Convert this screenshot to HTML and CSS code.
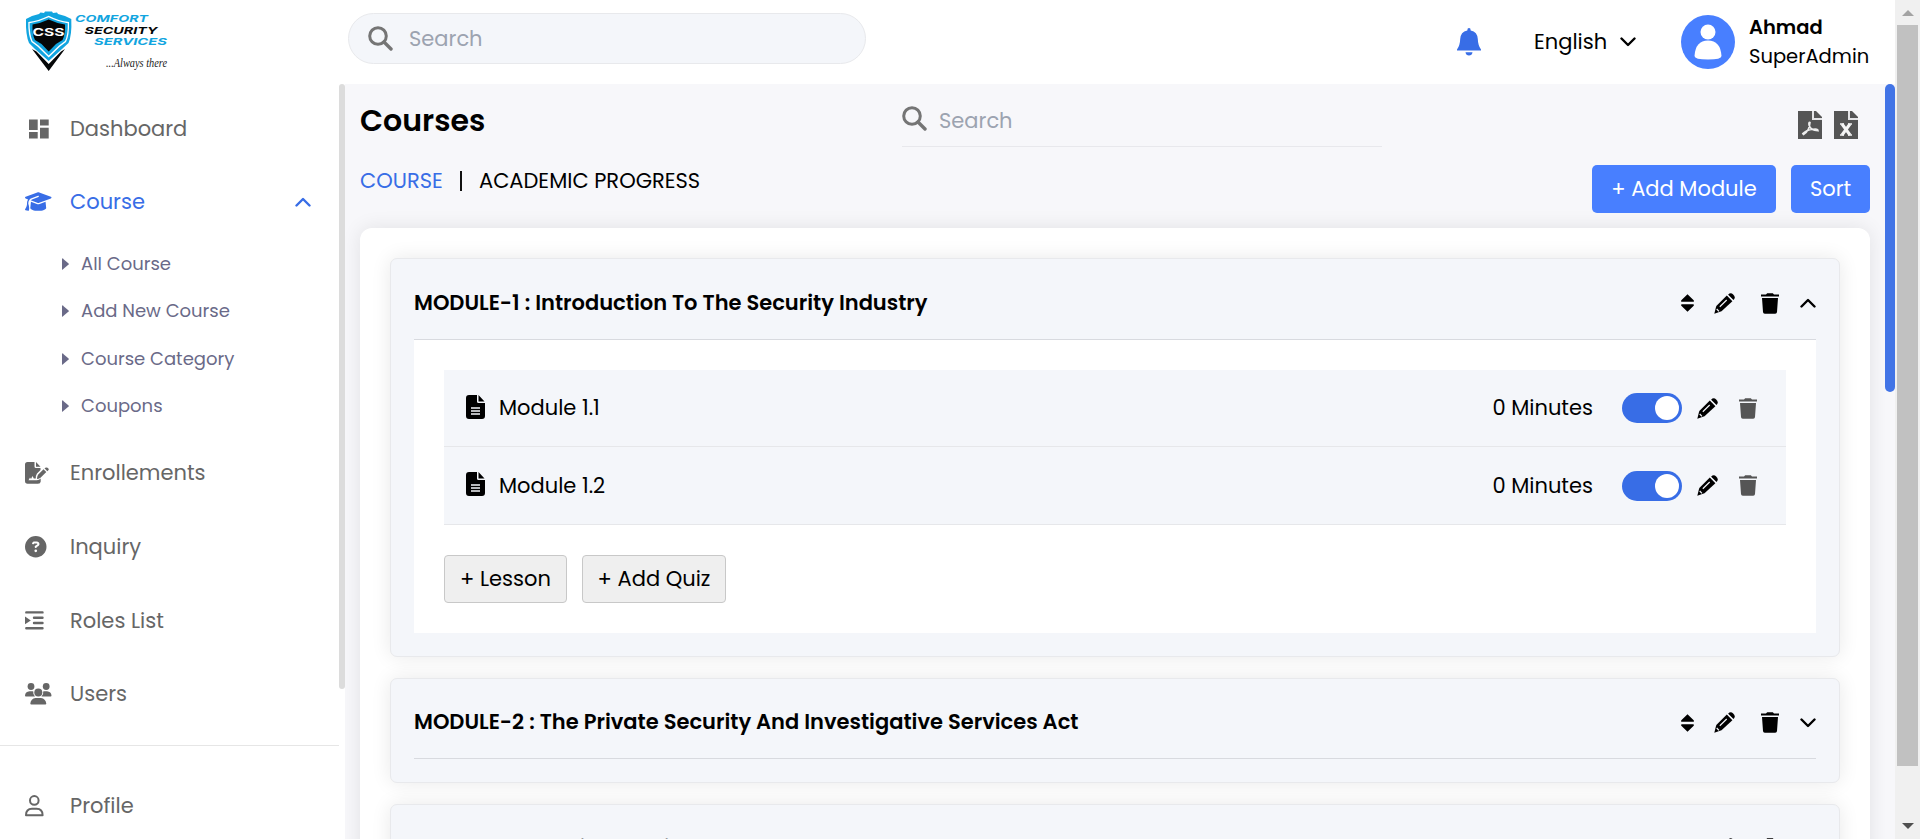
FILE: index.html
```html
<!DOCTYPE html>
<html lang="en">
<head>
<meta charset="utf-8">
<title>Courses</title>
<link rel="stylesheet" href="styles.css">
</head>
<body>
<svg width="0" height="0" class="sprite">
  <symbol id="search" viewBox="0 0 25 25"><circle cx="10" cy="10" r="8.3" fill="none" stroke="currentColor" stroke-width="3"/><path d="M16 16l7 7" stroke="currentColor" stroke-width="3.4" stroke-linecap="round"/></symbol>
  <symbol id="down" viewBox="0 0 16 10"><path d="M1.5 1.5L8 8l6.500-6.500" fill="none" stroke="currentColor" stroke-width="2.400" stroke-linecap="round" stroke-linejoin="round"/></symbol>
  <symbol id="up" viewBox="0 0 16 10"><path d="M1.500 8.500L8 2l6.500 6.500" fill="none" stroke="currentColor" stroke-width="2.400" stroke-linecap="round" stroke-linejoin="round"/></symbol>
  <symbol id="sort" viewBox="0 0 13 18"><path d="M6.500 0.300L12.700 6.300Q13.400 7.800 12 7.800H1Q-0.400 7.800 0.300 6.300ZM6.500 17.700L12.700 11.700Q13.400 10.200 12 10.200H1Q-0.400 10.200 0.300 11.700Z" fill="currentColor"/></symbol>
  <symbol id="pencil" viewBox="0 0 21 21"><path d="M12.800 2.400L18.400 8.200L7.500 18.300L0.300 20.700L2.300 13Z" fill="currentColor"/><path d="M14.100 1.700Q16.500-.9 19.200 1.500Q22.200 4.400 19.500 6.900Z" fill="currentColor"/><path d="M5.800 13.700L12.700 7M2.700 16L5 18.300" stroke="#f4f6fa" stroke-width="1.200"/><path d="M13.400 2.100L18.900 7.700" stroke="#f4f6fa" stroke-width="0.900"/></symbol>
  <symbol id="trash" viewBox="0 0 18 21"><path d="M0 1.500H5L6.200 0.300H11.800L13 1.500H18V3.500H0ZM1 5H17L16 19Q15.900 20.700 14.200 20.700H3.800Q2.100 20.700 2 19Z" fill="currentColor"/></symbol>
  <symbol id="doc" viewBox="0 0 19 24"><path d="M3 0H11V6.500Q11 8 12.500 8H19V21Q19 24 16 24H3Q0 24 0 21V3Q0 0 3 0ZM12.500 0L18.500 6.500H12.500Z" fill="currentColor"/><path d="M5 13H14M5 16H14M5 19H14" stroke="#f4f6fa" stroke-width="1.400"/></symbol>
  <symbol id="caret" viewBox="0 0 7 12"><path d="M0 0.500Q0 0 0.700 0.400L6.600 5.500Q7 6 6.600 6.500L0.700 11.600Q0 12 0 11.500Z" fill="currentColor"/></symbol>
</svg>
<div class="window">
  <div class="app">
    <header class="header">
      <div class="brand">
        <svg class="logo" width="160" height="66" viewBox="0 0 160 66">
          <path d="M6 38L22.700 60L39 38L35 40.500L22.700 53L10.500 40.500Z" fill="#050708"/>
          <path d="M6 5L13 3L14.500 1.500L18 2L19 0.500H26L27 2L31 1.500L32 3L39 5L45.300 8Q46 24 42.500 32L36 38L22.700 50L9 38L3 32Q-0.500 24 0 8Z" fill="#12a5e0"/>
          <path d="M2.300 11Q12 10 22.700 4.800Q33 10 43 11Q43.500 24 40 31L34 35.500L22.700 46.500L11.500 35.500L5.500 31Q2 24 2.300 11Z" fill="#fff"/>
          <path d="M3.600 12.200Q13 11 22.700 6.300Q32 11 41.800 12.200Q42 23.500 39 30L33 34.500L22.700 44.500L12.500 34.500L6.500 30Q3.500 23 3.600 12.200Z" fill="#12a5e0"/>
          <path d="M6.500 13.500Q14 12.500 22.700 8.500Q31 12.500 39 13.500Q39.500 23 36.500 29L30 33L22.700 40.500L15.500 33L9 29Q6 23 6.500 13.500Z" fill="#050708"/>
          <text x="6.500" y="24.800" class="wordmark upright" font-size="10.500" textLength="32" lengthAdjust="spacingAndGlyphs" fill="#fff">CSS</text>
          <g class="wordmark" font-size="9.600">
            <text x="49" y="11" textLength="73" lengthAdjust="spacingAndGlyphs" fill="#12a5e0">COMFORT</text>
            <text x="58.500" y="22.500" textLength="73" lengthAdjust="spacingAndGlyphs" fill="#050708">SECURITY</text>
            <text x="68" y="34" textLength="73" lengthAdjust="spacingAndGlyphs" fill="#12a5e0">SERVICES</text>
          </g>
          <text x="80" y="55.500" class="tagline" font-size="12" textLength="61" lengthAdjust="spacingAndGlyphs" fill="#222">...Always there</text>
        </svg>
      </div>
      <div class="search-pill"><svg class="i25"><use href="#search"/></svg><span class="placeholder">Search</span></div>
      <div class="header-right">
        <svg class="bell" width="24" height="28" viewBox="0 0 24 28"><path d="M12 0Q13.700 0 13.700 2.400Q20.500 3.800 20.800 11Q21 17.500 24 21.500V22.500H0V21.500Q3 17.500 3.200 11Q3.500 3.800 10.300 2.400Q10.300 0 12 0ZM8.500 24.300H15.500Q15 27.500 12 27.500Q9 27.500 8.500 24.300Z" fill="#386de6"/></svg>
        <div class="language"><span>English</span><svg class="chev"><use href="#down"/></svg></div>
        <svg class="avatar" width="54" height="54" viewBox="0 0 54 54"><circle cx="27" cy="27" r="27" fill="#487fff"/><circle cx="27" cy="17" r="7.500" fill="#fff"/><path d="M13.500 41Q14.500 25.500 27 25.500Q39.500 25.500 40.500 41Q40.500 44.500 27 44.500Q13.500 44.500 13.500 41Z" fill="#fff"/></svg>
        <div class="user"><b class="user-name">Ahmad</b><span class="user-role">SuperAdmin</span></div>
      </div>
    </header>
    <div class="body">
      <aside class="sidebar">
        <nav class="nav">
          <a class="item"><span class="icon"><svg class="dash" width="20" height="20" viewBox="0 0 20 20"><path d="M0 0.500H8.700V11H0ZM0 13H8.700V19.500H0ZM11 0.500H19.700V6.500H11ZM11 8.800H19.700V19.500H11Z" fill="currentColor"/></svg></span><span>Dashboard</span></a>
          <a class="item active"><span class="icon"><svg width="26.500" height="21.200" viewBox="0 0 640 512"><path fill="currentColor" d="M320 32c-8.100 0-16.100 1.400-23.700 4.100L15.800 137.400C6.300 140.900 0 149.900 0 160s6.300 19.100 15.800 22.600l57.900 20.900C57.300 229.300 48 259.800 48 291.900v28.100c0 28.400-10.800 57.700-22.300 80.800c-6.500 13-13.900 25.800-22.500 37.600C0 442.700-.9 448.300 .9 453.400s6 8.900 11.200 10.200l64 16c4.200 1.100 8.700 .3 12.400-2s6.300-6.100 7.100-10.400c8.600-42.800 4.300-81.200-2.100-108.700C90.300 344.300 86 329.800 80 316.500V291.900c0-30.200 10.200-58.700 27.900-81.500c12.900-15.500 29.600-28 49.200-35.700l157-61.700c8.200-3.200 17.500 .8 20.700 9s-.8 17.500-9 20.700l-157 61.700c-12.400 4.900-23.300 12.400-32.200 21.600l159.600 57.600c7.600 2.700 15.600 4.100 23.700 4.100s16.100-1.400 23.700-4.100L624.200 182.600c9.500-3.400 15.800-12.500 15.800-22.600s-6.300-19.100-15.800-22.600L343.700 36.100C336.100 33.400 328.100 32 320 32zM128 408c0 35.300 86 72 192 72s192-36.700 192-72L496.700 262.600 354.500 314c-11.100 4-22.800 6-34.500 6s-23.500-2-34.500-6L143.300 262.600 128 408z"/></svg></span><span>Course</span><svg class="chev toggle-chev"><use href="#up"/></svg></a>
          <div class="submenu">
            <a class="sub"><svg class="caret"><use href="#caret"/></svg><span>All Course</span></a>
            <a class="sub"><svg class="caret"><use href="#caret"/></svg><span>Add New Course</span></a>
            <a class="sub"><svg class="caret"><use href="#caret"/></svg><span>Course Category</span></a>
            <a class="sub"><svg class="caret"><use href="#caret"/></svg><span>Coupons</span></a>
          </div>
          <a class="item"><span class="icon"><svg width="24" height="22" viewBox="0 0 24 22"><path d="M2.500 0H9.500V4.500Q9.500 6 11 6H15.500V8L12 11.500Q10.800 13 10.800 16.500H8.800L7.500 14L6 17L5 15.500L3.500 18.300H11.500Q14 18.500 15.700 16.600V19.500Q15.500 21.700 13 21.700H2.500Q0 21.700 0 19V2.500Q0 0 2.500 0ZM11 0L15.500 4.700H11ZM18.500 7.300L21.300 10L15.500 15.700Q13.500 17 12 17Q12 14.500 13 12.800ZM19.500 6.300Q21 4.800 22.500 5.800Q24.500 7.200 23.300 8.300L22.300 9.200Z" fill="currentColor"/></svg></span><span>Enrollements</span></a>
          <a class="item"><span class="icon"><svg width="21.500" height="21.500" viewBox="0 0 512 512"><path fill="currentColor" fill-rule="evenodd" d="M256 512A256 256 0 1 0 256 0a256 256 0 1 0 0 512zM169.800 165.300c7.900-22.300 29.100-37.300 52.800-37.300h58.300c34.900 0 63.100 28.300 63.100 63.100c0 22.600-12.100 43.500-31.700 54.800L280 264.400c-.2 13-10.900 23.600-24 23.600c-13.300 0-24-10.700-24-24V250.500c0-8.600 4.600-16.500 12.100-20.800l44.300-25.400c4.700-2.700 7.600-7.700 7.600-13.100c0-8.400-6.800-15.100-15.100-15.100H222.600c-3.400 0-6.400 2.100-7.500 5.300l-.4 1.200c-4.400 12.500-18.200 19-30.600 14.600s-19-18.200-14.600-30.600l.3-1.200zM224 352a32 32 0 1 1 64 0 32 32 0 1 1 -64 0z"/></svg></span><span>Inquiry</span></a>
          <a class="item"><span class="icon"><svg width="19" height="19" viewBox="0 0 19 19"><path d="M1.300 1.400H17.500M9 6.800H17.500M9 12H17.500M1.300 17.300H17.500" stroke="currentColor" stroke-width="2.400" stroke-linecap="round"/><path d="M0 5.500L5.800 9.400L0 13.300Z" fill="currentColor"/></svg></span><span>Roles List</span></a>
          <a class="item"><span class="icon"><svg width="26.500" height="22" viewBox="0 0 26.500 22"><g fill="currentColor"><circle cx="6" cy="3.500" r="3.400"/><circle cx="21.200" cy="3.500" r="3.400"/><circle cx="13.300" cy="9.500" r="4"/><path d="M4.500 8.200H7.500L8.300 8.400Q7.700 11.500 10 13.500H0.800Q0 13.500 0 12.500Q0.300 8.500 4.500 8.200ZM22 8.200H19L18.200 8.400Q18.800 11.500 16.500 13.500H25.700Q26.500 13.500 26.500 12.500Q26.200 8.500 22 8.200ZM10.500 15H16Q20.500 15.500 21.300 20.500Q21.300 21.600 20.300 21.600H6.300Q5.300 21.600 5.300 20.500Q6 15.500 10.500 15Z"/></g></svg></span><span>Users</span></a>
          <hr class="divider">
          <a class="item"><span class="icon"><svg width="19" height="22" viewBox="0 0 19 22"><g fill="none" stroke="currentColor" stroke-width="2"><circle cx="9.300" cy="5.400" r="4.300"/><path d="M1 20.300Q1 13.800 7 13.800H11.600Q17.600 13.800 17.600 20.300Z" stroke-linejoin="round"/></g></svg></span><span>Profile</span></a>
        </nav>
        <div class="side-track"><div class="side-thumb"></div></div>
      </aside>
      <main class="main">
        <div class="title-row">
          <h1 class="title">Courses</h1>
          <div class="line-search"><svg class="i25"><use href="#search"/></svg><span class="placeholder">Search</span></div>
          <div class="exports">
            <svg width="24" height="28" viewBox="0 0 24 28"><path d="M0 0H24V28H0Z" fill="#555"/><path d="M18 0H24V6Z" fill="#f7f7fa"/><path d="M15 0V8H24" fill="none" stroke="#e4e4e6" stroke-width="2"/><path d="M5.500 23.500Q11.500 20 12 11.500Q10.500 11 11 14Q12.500 19.500 20 19.800Q20 17.500 15 18.300Q8 19.300 4.800 22.500Z" fill="none" stroke="#eee" stroke-width="1.600"/></svg>
            <svg width="24" height="28" viewBox="0 0 24 28"><path d="M0 0H24V28H0Z" fill="#555"/><path d="M18 0H24V6Z" fill="#f7f7fa"/><path d="M15 0V8H24" fill="none" stroke="#e4e4e6" stroke-width="2"/><path d="M8 13L16 24M16 13L8 24" stroke="#f4f4f4" stroke-width="3"/><path d="M6 13H10M14 13H18M6 24H10M14 24H18" stroke="#f4f4f4" stroke-width="1.500"/></svg>
          </div>
        </div>
        <div class="crumb-row">
          <div class="crumbs"><a class="crumb-link">COURSE</a><span class="crumb-sep"></span><span>ACADEMIC PROGRESS</span></div>
          <div class="actions"><button class="btn add-module">+ Add Module</button><button class="btn sort">Sort</button></div>
        </div>
        <section class="panel">
          <article class="module">
            <div class="module-head first"><h2>MODULE-1 : Introduction To The Security Industry</h2><div class="tools"><svg class="sort-i"><use href="#sort"/></svg><svg class="pencil"><use href="#pencil"/></svg><svg class="trash"><use href="#trash"/></svg><svg class="chev"><use href="#up"/></svg></div></div>
            <div class="module-body">
              <div class="lesson"><svg class="doc"><use href="#doc"/></svg><span>Module 1.1</span><span class="minutes">0 Minutes</span><span class="switch"></span><svg class="pencil"><use href="#pencil"/></svg><svg class="trash muted"><use href="#trash"/></svg></div>
              <div class="lesson second"><svg class="doc"><use href="#doc"/></svg><span>Module 1.2</span><span class="minutes">0 Minutes</span><span class="switch"></span><svg class="pencil"><use href="#pencil"/></svg><svg class="trash muted"><use href="#trash"/></svg></div>
              <div class="lesson-actions"><button class="ghost g1">+ Lesson</button><button class="ghost g2">+ Add Quiz</button></div>
            </div>
          </article>
          <article class="module">
            <div class="module-head"><h2>MODULE-2 : The Private Security And Investigative Services Act</h2><div class="tools"><svg class="sort-i"><use href="#sort"/></svg><svg class="pencil"><use href="#pencil"/></svg><svg class="trash"><use href="#trash"/></svg><svg class="chev"><use href="#down"/></svg></div></div>
          </article>
          <article class="module">
            <div class="module-head"><h2>MODULE-3 : Basic Security Procedures</h2><div class="tools"><svg class="sort-i"><use href="#sort"/></svg><svg class="pencil"><use href="#pencil"/></svg><svg class="trash"><use href="#trash"/></svg><svg class="chev"><use href="#down"/></svg></div></div>
          </article>
        </section>
      </main>
      <div class="main-track"><div class="main-thumb"></div></div>
    </div>
  </div>
  <div class="page-scroll"><svg class="arrow" width="12" height="6"><path d="M0 6L6 0L12 6Z" fill="#a3a3a3"/></svg><div class="page-thumb"></div><svg class="arrow arrow-down" width="12" height="6"><path d="M0 0H12L6 6Z" fill="#505050"/></svg></div>
</div>
</body>
</html>
```

FILE: styles.css
```css
* { box-sizing: border-box; }
body { margin: 0; font: 400 21px/30px Poppins, Inter, sans-serif; color: #000; background: #fff; overflow: hidden; white-space: nowrap; }
svg { display: block; flex: none; }
.sprite { position: absolute; }
h1, h2 { margin: 0; }
button { font: inherit; }
.window { display: flex; height: 839px; overflow: hidden; }
.app { flex: 1; display: flex; flex-direction: column; min-width: 0; }

.i25 { width: 25px; height: 25px; color: #757575; }
.chev { width: 16px; height: 10px; }
.placeholder { color: #9ca3b0; }

.header { height: 84px; flex: none; display: flex; }
.brand { width: 348px; padding: 11px 0 0 26px; }
.logo { overflow: visible; }
.wordmark { font-family: Inter, sans-serif; font-weight: 700; font-style: italic; }
.upright { font-style: normal; }
.tagline { font-family: "Liberation Serif", serif; font-style: italic; }
.search-pill { width: 518px; height: 51px; margin-top: 13px; border: 1px solid #e8e9ec; border-radius: 26px; background: #f4f6fa; display: flex; align-items: center; gap: 16px; padding-left: 19px; }
.header-right { height: 83px; margin-left: auto; display: flex; align-items: center; padding-right: 27px; }
.bell { margin-right: 53px; }
.language { width: 147px; display: flex; align-items: center; gap: 13px; }
.user { width: 119px; margin-left: 14px; display: flex; flex-direction: column; font-size: 19.5px; line-height: 29px; }
.user-name { font-weight: 600; }

.body { flex: 1; display: flex; min-height: 0; background: #f7f7fa; }
.sidebar { width: 345px; display: flex; background: #fff; flex: none; }
.nav { width: 339px; padding-top: 8px; }
.item { display: flex; align-items: center; height: 73.8px; padding-left: 25px; color: #666; }
.item:nth-child(-n+2) { height: 73px; }
.icon { width: 45px; flex: none; }
.dash { margin-left: 3.5px; }
.active { color: #386de6; }
.toggle-chev { margin-left: auto; margin-right: 28px; }
.submenu { padding: 2.4px 0 6.5px 62px; }
.sub { display: flex; align-items: center; gap: 12px; height: 47.3px; font-size: 18px; color: #6a6a88; }
.caret { width: 7px; height: 12px; }
.divider { margin: 14px 0 23px; border: 0; border-top: 1px solid #e6e6e6; }
.side-thumb { width: 6px; height: 605px; border-radius: 3px; background: #dcdcdc; }

.main { flex: 1; min-width: 0; padding: 0 15px; overflow: hidden; }
.title-row { height: 78px; display: flex; align-items: flex-start; }
.title { width: 542px; padding-top: 21px; font-size: 30px; line-height: 31px; font-weight: 600; }
.line-search { width: 480px; height: 63px; padding-top: 11px; border-bottom: 1px solid #e8e8ec; display: flex; align-items: center; gap: 12px; }
.line-search .i25 { margin-bottom: 5px; }
.exports { display: flex; gap: 12px; margin: 27px 12px 0 auto; }
.crumb-row { height: 66px; padding-top: 3px; display: flex; justify-content: space-between; align-items: flex-start; }
.crumbs { display: flex; align-items: center; height: 31px; }
.crumb-link { width: 100px; color: #386de6; }
.crumb-sep { width: 2px; height: 20px; background: #111; margin-right: 17px; }
.actions { display: flex; gap: 15px; }
.btn { height: 48px; border: 0; border-radius: 5px; background: #487fff; color: #fff; padding: 0; }
.add-module { width: 184px; }
.sort { width: 79px; }

.panel { height: 900px; padding: 30px; border-radius: 12px; background: #fff; box-shadow: 0 0 20px rgba(0, 0, 0, .09); }
.module { padding: 0 23px 23px; margin-bottom: 21px; border: 1px solid #e8e9ec; border-radius: 7px; background: #f4f6fa; box-shadow: 0 0 20px rgba(0, 0, 0, .09); }
.module-head { height: 80px; padding-top: 7px; border-bottom: 1px solid #d8dadf; display: flex; align-items: center; justify-content: space-between; }
.first { height: 81px; }
.module-head h2 { font-size: 21px; line-height: 30px; font-weight: 600; }
.tools { display: flex; align-items: center; margin-top: 1px; }
.sort-i { width: 13px; height: 18px; margin-right: 20px; }
.pencil { width: 21px; height: 21px; }
.trash { width: 18px; height: 21px; }
.tools .pencil { margin-right: 26px; }
.tools .trash { margin-right: 21px; }
.module-body { height: 293px; background: #fff; padding: 30px 30px 0; }
.lesson { height: 77px; border-bottom: 1px solid #e6e7ea; background: #f4f6fa; display: flex; align-items: center; padding: 0 29px 0 22px; }
.second { height: 78px; }
.doc { width: 19px; height: 24px; margin-right: 14px; margin-bottom: 3px; }
.minutes { margin-left: auto; margin-right: 29px; }
.switch { width: 60px; height: 30px; border-radius: 15px; background: #386de6; display: flex; justify-content: flex-end; padding: 3px; margin-right: 15px; }
.switch::after { content: ""; width: 24px; height: 24px; border-radius: 50%; background: #fff; }
.lesson .pencil { margin-right: 21px; }
.muted { color: #555; }
.lesson-actions { display: flex; gap: 15px; padding-top: 30px; }
.ghost { height: 48px; padding: 0; border: 1px solid #c8c8c8; border-radius: 4px; background: #efefef; color: #000; }
.g1 { width: 123px; }
.g2 { width: 144px; }
.main-track { width: 10px; }
.main-thumb { height: 308px; border-radius: 5px; background: #4274e6; }
.page-scroll { width: 25px; flex: none; background: #f0f0f0; display: flex; flex-direction: column; align-items: center; }
.arrow { margin: 10px 0 9px; }
.page-thumb { width: 21px; height: 741px; background: #c1c1c1; }
.arrow-down { margin: auto 0 10px; }
```
